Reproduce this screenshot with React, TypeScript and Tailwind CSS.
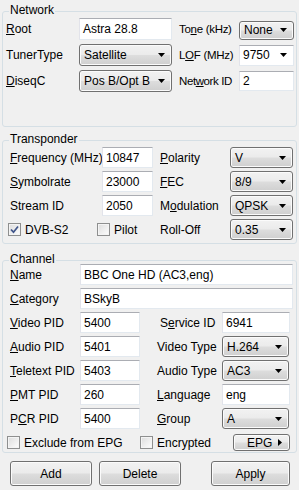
import React from "react";

type Props = { value?: string; className?: string; children?: React.ReactNode };

function DownArrow() {
  return (
    <svg width="7" height="4" viewBox="0 0 7 4" className="shrink-0">
      <path d="M0 0h7L3.5 4z" fill="#000" />
    </svg>
  );
}

function Lbl({ className = "", children }: Props) {
  return <div className={`whitespace-nowrap ${className}`}>{children}</div>;
}

// read-only dropdown list, drawn like a win7 push button
function Combo({ value, className = "" }: Props) {
  return (
    <div
      className={`flex items-center justify-between border border-[#707070] rounded-[3px] bg-[linear-gradient(#f2f2f2,#ebebeb_48%,#dddddd_52%,#cfcfcf)] shadow-[inset_0_0_0_1px_#fbfbfb] pl-[4px] pr-[6px] ${className}`}
    >
      <span>{value}</span>
      <DownArrow />
    </div>
  );
}

function Field({ value, className = "", children }: Props) {
  return (
    <div
      className={`flex items-center bg-white border border-[#e3e9ef] border-t-[#abadb3] border-l-[#e2e3ea] pl-[3px] ${className}`}
    >
      <span>{value}</span>
      {children}
    </div>
  );
}

function Check({ checked = false, label, className = "" }: { checked?: boolean; label: string; className?: string }) {
  return (
    <div className={`flex items-center gap-[4px] ${className}`}>
      <div className="w-[13px] h-[13px] border border-[#8e8f8f] bg-[linear-gradient(135deg,#dcdcdc,#fefefe)] shadow-[inset_0_0_0_1px_#f4f4f4] flex items-center justify-center shrink-0">
        {checked && (
          <svg width="11" height="11" viewBox="0 0 11 11">
            <path d="M2 5.5L4.5 8.2L9 2.5" fill="none" stroke="#40558a" strokeWidth="1.7" />
          </svg>
        )}
      </div>
      <span className="whitespace-nowrap">{label}</span>
    </div>
  );
}

function Btn({ className = "", children }: Props) {
  return (
    <div
      className={`flex items-center justify-center border border-[#707070] rounded-[3px] bg-[linear-gradient(#f2f2f2,#ebebeb_48%,#dddddd_52%,#cfcfcf)] shadow-[inset_0_0_0_1px_#fbfbfb] ${className}`}
    >
      {children}
    </div>
  );
}

function Group({ title, className = "", children }: { title: string; className?: string; children: React.ReactNode }) {
  return (
    <div className={`relative ml-[2px] w-[295px] border border-[#d5dfe5] rounded-[3px] ${className}`}>
      <span className="absolute left-[6px] top-[-9px] px-[1px] bg-[#f0f0f0] leading-[14px]">{title}</span>
      {children}
    </div>
  );
}

export default function App() {
  return (
    <div className="w-[299px] h-[490px] overflow-hidden bg-[#f0f0f0] text-[12px] leading-[14px] text-black [font-family:'Liberation_Sans',Arial,sans-serif] pt-[11px]">
      <Group title="Network" className="h-[116px] pt-[6px] pl-[3px]">
        <div className="grid grid-cols-[73px_93px_67px_55px] auto-rows-[22px] gap-y-[4px] items-center">
          <Lbl>
            <u>R</u>oot
          </Lbl>
          <Field value="Astra 28.8" className="h-[22px]" />
          <Lbl className="pl-[7px] text-[11.5px] tracking-[-0.3px]">
            To<u>n</u>e (kHz)
          </Lbl>
          <Combo value="None" className="h-[19px] mt-[2px]" />

          <Lbl>TunerType</Lbl>
          <Combo value="Satellite" className="h-[22px]" />
          <Lbl className="pl-[7px] text-[11.5px] tracking-[-0.3px]">
            L<u>O</u>F (MHz)
          </Lbl>
          <Field value="9750" className="h-[21px] justify-between pr-[6px]">
            <DownArrow />
          </Field>

          <Lbl>
            <u>D</u>iseqC
          </Lbl>
          <Combo value="Pos B/Opt B" className="h-[22px]" />
          <Lbl className="pl-[7px] text-[11.5px] tracking-[-0.4px]">
            Net<u>w</u>ork ID
          </Lbl>
          <Field value="2" className="h-[20px]" />
        </div>
      </Group>

      <Group title="Transponder" className="mt-[13px] h-[104px] pt-[6px] pl-[7px]">
        <div className="grid grid-cols-[92px_51px_77px_63px] auto-rows-[21px] gap-y-[3px] items-center">
          <Lbl>
            <u>F</u>requency (MHz)
          </Lbl>
          <Field value="10847" className="h-[21px]" />
          <Lbl className="pl-[7px]">
            <u>P</u>olarity
          </Lbl>
          <Combo value="V" className="h-[21px]" />

          <Lbl>
            <u>S</u>ymbolrate
          </Lbl>
          <Field value="23000" className="h-[21px]" />
          <Lbl className="pl-[7px]">
            <u>F</u>EC
          </Lbl>
          <Combo value="8/9" className="h-[21px]" />

          <Lbl>Stream ID</Lbl>
          <Field value="2050" className="h-[21px]" />
          <Lbl className="pl-[7px]">
            M<u>o</u>dulation
          </Lbl>
          <Combo value="QPSK" className="h-[21px]" />

          <div className="col-span-2 flex items-center -ml-[2px]">
            <Check checked label="DVB-S2" className="w-[89px]" />
            <Check label="Pilot" />
          </div>
          <Lbl className="pl-[7px]">Roll-Off</Lbl>
          <Combo value="0.35" className="h-[21px]" />
        </div>
      </Group>

      <Group title="Channel" className="mt-[16px] h-[193px] pt-[3px] pl-[7px]">
        <div className="grid grid-cols-[70px_60px_82px_68px] auto-rows-[21px] gap-y-[3px] items-center">
          <Lbl>
            <u>N</u>ame
          </Lbl>
          <Field value="BBC One HD (AC3,eng)" className="col-span-3 w-[213px] h-[21px]" />

          <Lbl>
            <u>C</u>ategory
          </Lbl>
          <Field value="BSkyB" className="col-span-3 w-[213px] h-[21px]" />

          <Lbl>
            <u>V</u>ideo PID
          </Lbl>
          <Field value="5400" className="h-[21px]" />
          <Lbl className="pl-[20px]">
            S<u>e</u>rvice ID
          </Lbl>
          <Field value="6941" className="h-[21px]" />

          <Lbl>
            <u>A</u>udio PID
          </Lbl>
          <Field value="5401" className="h-[21px]" />
          <Lbl className="pl-[17px]">Video Type</Lbl>
          <Combo value="H.264" className="h-[21px] w-[67px]" />

          <Lbl>
            <u>T</u>eletext PID
          </Lbl>
          <Field value="5403" className="h-[21px]" />
          <Lbl className="pl-[17px]">Audio Type</Lbl>
          <Combo value="AC3" className="h-[21px] w-[67px]" />

          <Lbl>
            <u>P</u>MT PID
          </Lbl>
          <Field value="260" className="h-[21px]" />
          <Lbl className="pl-[17px]">
            <u>L</u>anguage
          </Lbl>
          <Field value="eng" className="h-[21px]" />

          <Lbl>
            P<u>C</u>R PID
          </Lbl>
          <Field value="5400" className="h-[21px]" />
          <Lbl className="pl-[17px]">
            <u>G</u>roup
          </Lbl>
          <Combo value="A" className="h-[21px] w-[67px]" />
        </div>
        <div className="flex items-center -ml-[3px] mt-[5px]">
          <Check label="Exclude from EPG" className="w-[133px]" />
          <Check label="Encrypted" className="w-[93px]" />
          <Btn className="w-[57px] h-[17px] justify-start pl-[13px] pr-[7px]">
            <span>EPG</span>
            <svg width="4" height="7" viewBox="0 0 4 7" className="ml-auto">
              <path d="M0 0v7l4-3.5z" fill="#000" />
            </svg>
          </Btn>
        </div>
      </Group>

      <div className="flex mt-[8px]">
        <Btn className="ml-[10px] w-[82px] h-[25px]">Add</Btn>
        <Btn className="ml-[7px] w-[82px] h-[25px]">Delete</Btn>
        <Btn className="ml-[30px] w-[79px] h-[25px]">Apply</Btn>
      </div>
    </div>
  );
}
